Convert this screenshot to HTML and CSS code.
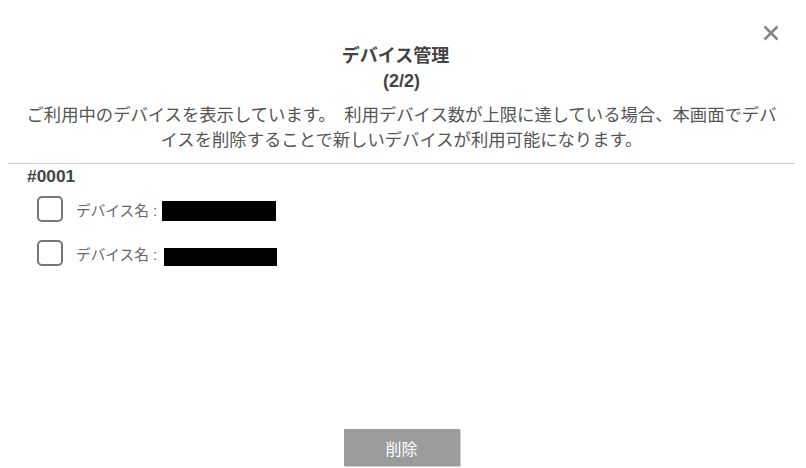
FILE: index.html
```html
<!DOCTYPE html>
<html lang="ja">
<head>
<meta charset="utf-8">
<title>デバイス管理</title>
<link rel="stylesheet" href="styles.css">
</head>
<body>
<div class="modal">
  <button class="close" aria-label="閉じる">
    <svg width="16" height="16" viewBox="0 0 16 16"><path d="M1.5 1.5 L14.5 14.5 M14.5 1.5 L1.5 14.5" stroke="#858585" stroke-width="2.6" stroke-linecap="butt" fill="none"/></svg>
  </button>
  <header class="head">
    <h1 class="title">デバイス管理</h1>
    <div class="page">(2/2)</div>
    <p class="desc">ご利用中のデバイスを表示しています。　利用デバイス数が上限に達している場合、本画面でデバイスを削除することで新しいデバイスが利用可能になります。</p>
  </header>
  <section class="group">
    <div class="group-id">#0001</div>
    <ul class="devices">
      <li class="device">
        <span class="check"></span>
        <span class="label">デバイス名 :</span>
        <span class="mask mask-a"></span>
      </li>
      <li class="device">
        <span class="check"></span>
        <span class="label">デバイス名 :</span>
        <span class="mask mask-b"></span>
      </li>
    </ul>
  </section>
  <footer class="foot">
    <button class="delete">削除</button>
  </footer>
</div>
</body>
</html>
```
FILE: styles.css
```css
html, body {
  margin: 0;
  padding: 0;
  background: #fff;
}
body {
  font-family: "Liberation Sans", "Noto Sans CJK JP", sans-serif;
  color: #555;
}
.modal {
  position: relative;
  height: 468px;
  box-sizing: border-box;
  margin: 0 11px 0 8px;
  display: flex;
  flex-direction: column;
}
.close {
  position: absolute;
  top: 25px;
  right: 16px;
  width: 16px;
  height: 16px;
  padding: 0;
  border: 0;
  background: none;
  display: block;
}
.close svg { display: block; }
.head {
  padding-top: 44px;
  text-align: center;
  border-bottom: 1px solid #cbcbcb;
  padding-bottom: 11px;
}
.title {
  margin: 0;
  padding-right: 12px;
  font-size: 18px;
  line-height: 25px;
  font-weight: bold;
  color: #444;
}
.page {
  font-size: 18px;
  line-height: 25px;
  font-weight: bold;
  color: #444;
}
.desc {
  margin: 9px 0 0;
  padding: 0 13.5px;
  font-size: 17.33px;
  line-height: 24.5px;
  color: #555;
}
.group {
  padding-left: 19px;
}
.group-id {
  font-size: 17.33px;
  line-height: 24px;
  font-weight: bold;
  color: #444;
}
.devices {
  list-style: none;
  margin: 8px 0 0;
  padding: 0 0 0 10px;
  display: flex;
  flex-direction: column;
  gap: 18px;
}
.device {
  display: flex;
  align-items: center;
  height: 26px;
}
.check {
  width: 26px;
  height: 26px;
  box-sizing: border-box;
  border: 2px solid #777;
  border-radius: 5px;
  flex: none;
}
.label {
  margin-left: 13px;
  font-size: 14.67px;
  color: #666;
  white-space: pre;
}
.mask {
  display: inline-block;
  background: #000;
}
.mask-a {
  width: 114px;
  height: 20px;
  margin-left: 5px;
  margin-top: 3px;
}
.mask-b {
  width: 113px;
  height: 18px;
  margin-left: 7px;
  margin-top: 7px;
}
.foot {
  margin-top: auto;
  padding-bottom: 2px;
  display: flex;
  justify-content: center;
}
.delete {
  width: 116px;
  height: 37px;
  border: 0;
  background: #9b9b9b;
  color: #fff;
  font-family: "Liberation Sans", "Noto Sans CJK JP", sans-serif;
  font-size: 16px;
  box-shadow: 1px 1px 0 #d0d0d0;
  padding: 0;
}
```
